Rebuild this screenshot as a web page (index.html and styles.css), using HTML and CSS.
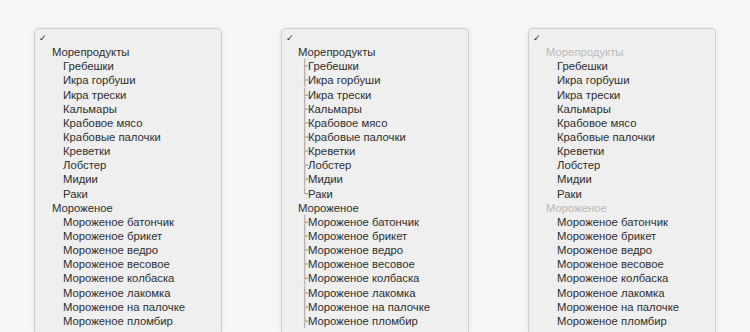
FILE: index.html
```html
<!DOCTYPE html>
<html lang="ru">
<head>
  <meta charset="UTF-8">
  <title>select optgroup</title>
  <link rel="stylesheet" href="styles.css">
</head>
<body>
  <main class="row">

    <!-- plain indent -->
    <div class="menu">
      <div class="item check">✓</div>
      <div class="item group">Морепродукты</div>
      <div class="item opt">Гребешки</div>
      <div class="item opt">Икра горбуши</div>
      <div class="item opt">Икра трески</div>
      <div class="item opt">Кальмары</div>
      <div class="item opt">Крабовое мясо</div>
      <div class="item opt">Крабовые палочки</div>
      <div class="item opt">Креветки</div>
      <div class="item opt">Лобстер</div>
      <div class="item opt">Мидии</div>
      <div class="item opt">Раки</div>
      <div class="item group">Мороженое</div>
      <div class="item opt">Мороженое батончик</div>
      <div class="item opt">Мороженое брикет</div>
      <div class="item opt">Мороженое ведро</div>
      <div class="item opt">Мороженое весовое</div>
      <div class="item opt">Мороженое колбаска</div>
      <div class="item opt">Мороженое лакомка</div>
      <div class="item opt">Мороженое на палочке</div>
      <div class="item opt">Мороженое пломбир</div>
    </div>

    <!-- tree lines -->
    <div class="menu tree">
      <div class="item check">✓</div>
      <div class="item group">Морепродукты</div>
      <div class="item opt"><span class="br">├</span>Гребешки</div>
      <div class="item opt"><span class="br">├</span>Икра горбуши</div>
      <div class="item opt"><span class="br">├</span>Икра трески</div>
      <div class="item opt"><span class="br">├</span>Кальмары</div>
      <div class="item opt"><span class="br">├</span>Крабовое мясо</div>
      <div class="item opt"><span class="br">├</span>Крабовые палочки</div>
      <div class="item opt"><span class="br">├</span>Креветки</div>
      <div class="item opt"><span class="br">├</span>Лобстер</div>
      <div class="item opt"><span class="br">├</span>Мидии</div>
      <div class="item opt"><span class="br">└</span>Раки</div>
      <div class="item group">Мороженое</div>
      <div class="item opt"><span class="br">├</span>Мороженое батончик</div>
      <div class="item opt"><span class="br">├</span>Мороженое брикет</div>
      <div class="item opt"><span class="br">├</span>Мороженое ведро</div>
      <div class="item opt"><span class="br">├</span>Мороженое весовое</div>
      <div class="item opt"><span class="br">├</span>Мороженое колбаска</div>
      <div class="item opt"><span class="br">├</span>Мороженое лакомка</div>
      <div class="item opt"><span class="br">├</span>Мороженое на палочке</div>
      <div class="item opt"><span class="br">├</span>Мороженое пломбир</div>
    </div>

    <!-- disabled group labels -->
    <div class="menu muted">
      <div class="item check">✓</div>
      <div class="item group">Морепродукты</div>
      <div class="item opt">Гребешки</div>
      <div class="item opt">Икра горбуши</div>
      <div class="item opt">Икра трески</div>
      <div class="item opt">Кальмары</div>
      <div class="item opt">Крабовое мясо</div>
      <div class="item opt">Крабовые палочки</div>
      <div class="item opt">Креветки</div>
      <div class="item opt">Лобстер</div>
      <div class="item opt">Мидии</div>
      <div class="item opt">Раки</div>
      <div class="item group">Мороженое</div>
      <div class="item opt">Мороженое батончик</div>
      <div class="item opt">Мороженое брикет</div>
      <div class="item opt">Мороженое ведро</div>
      <div class="item opt">Мороженое весовое</div>
      <div class="item opt">Мороженое колбаска</div>
      <div class="item opt">Мороженое лакомка</div>
      <div class="item opt">Мороженое на палочке</div>
      <div class="item opt">Мороженое пломбир</div>
    </div>

  </main>
</body>
</html>
```

FILE: styles.css
```css
body {
  margin: 0;
  background: #f7f7f7;
  font-family: "Liberation Sans", Arial, sans-serif;
  font-size: 11.3px;
  color: #2e2e2e;
  overflow: hidden;
}

.row {
  display: flex;
  gap: 59px;
  padding: 28px 0 0 34px;
  height: 332px;
  box-sizing: border-box;
}

.menu {
  width: 188px;
  flex: none;
  background: #efefef;
  border: 1px solid #cfcfcf;
  border-bottom: none;
  border-radius: 5px 5px 0 0;
  box-shadow: 0 0 6px rgba(0, 0, 0, 0.08);
  padding-top: 2px;
  box-sizing: border-box;
}

.item {
  height: 14.15px;
  line-height: 14.15px;
  white-space: nowrap;
}

.check {
  padding-left: 4px;
  font-family: "DejaVu Sans", sans-serif;
  font-size: 9px;
  color: #222;
}

.group {
  padding-left: 17px;
}

.opt {
  padding-left: 28px;
}

.tree .group {
  padding-left: 16px;
}

.tree .opt {
  padding-left: 19px;
}

.br {
  display: inline-block;
  width: 7px;
  font-family: "DejaVu Sans Mono", monospace;
  color: #a0a0a0;
  font-size: 12px;
}

.muted .group {
  color: #b9b9b9;
}
```
